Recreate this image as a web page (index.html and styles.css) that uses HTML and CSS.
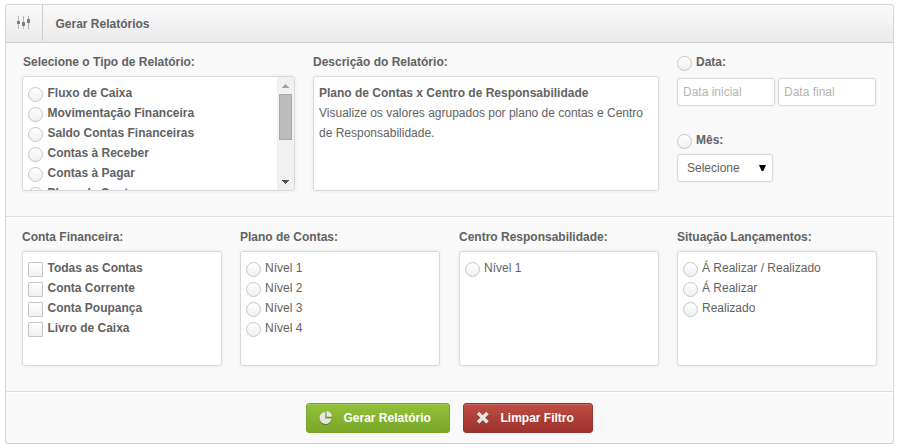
FILE: index.html
```html
<!DOCTYPE html>
<html lang="pt-BR">
<head>
<meta charset="utf-8">
<title>Gerar Relatórios</title>
<link rel="stylesheet" href="styles.css">
</head>
<body>
<form class="panel">
  <header class="head">
    <div class="head-icon">
      <svg width="14" height="14" viewBox="0 0 14 14" shape-rendering="crispEdges">
        <path fill="#b4b4b4" d="M1 0h1v13H1zM6 0h1v13H6zM11 0h1v13h-1z"/>
        <path fill="#808080" d="M0 5h3v3H0zM5 6h3v4H5zM10 3h3v4h-3z"/>
      </svg>
    </div>
    <h1 class="title">Gerar Relatórios</h1>
  </header>

  <section class="row top">
    <div class="field type">
      <div class="label">Selecione o Tipo de Relatório:</div>
      <div class="box scroller">
        <div class="options bold">
          <label class="opt"><i class="radio"></i><span>Fluxo de Caixa</span></label>
          <label class="opt"><i class="radio"></i><span>Movimentação Financeira</span></label>
          <label class="opt"><i class="radio"></i><span>Saldo Contas Financeiras</span></label>
          <label class="opt"><i class="radio"></i><span>Contas à Receber</span></label>
          <label class="opt"><i class="radio"></i><span>Contas à Pagar</span></label>
          <label class="opt"><i class="radio"></i><span>Plano de Contas</span></label>
        </div>
        <div class="bar">
          <svg width="7" height="4" viewBox="0 0 7 4" shape-rendering="crispEdges"><path fill="#a3a3a3" d="M3 0h1v1h1v1h1v1h1v1H0V3h1V2h1V1h1z"/></svg>
          <div class="thumb"></div>
          <svg class="down" width="7" height="4" viewBox="0 0 7 4" shape-rendering="crispEdges"><path fill="#505050" d="M0 0h7v1H6v1H5v1H4v1H3V3H2V2H1V1H0z"/></svg>
        </div>
      </div>
    </div>
    <div class="field desc">
      <div class="label">Descrição do Relatório:</div>
      <div class="box text"><b>Plano de Contas x Centro de Responsabilidade</b><br>Visualize os valores agrupados por plano de contas e Centro de Responsabilidade.</div>
    </div>
    <div class="field period">
      <label class="pick"><i class="radio"></i><span>Data:</span></label>
      <div class="dates">
        <input class="input" type="text" placeholder="Data inicial">
        <input class="input" type="text" placeholder="Data final">
      </div>
      <label class="pick month"><i class="radio"></i><span>Mês:</span></label>
      <div class="select"><span>Selecione</span><svg width="7" height="6" viewBox="0 0 7 6"><path d="M0 0h7L4.300 6H2.700z"/></svg></div>
    </div>
  </section>

  <section class="row filters">
    <div class="field">
      <div class="label">Conta Financeira:</div>
      <div class="box options bold">
        <label class="opt"><i class="check"></i><span>Todas as Contas</span></label>
        <label class="opt"><i class="check"></i><span>Conta Corrente</span></label>
        <label class="opt"><i class="check"></i><span>Conta Poupança</span></label>
        <label class="opt"><i class="check"></i><span>Livro de Caixa</span></label>
      </div>
    </div>
    <div class="field">
      <div class="label">Plano de Contas:</div>
      <div class="box options">
        <label class="opt"><i class="radio"></i><span>Nível 1</span></label>
        <label class="opt"><i class="radio"></i><span>Nível 2</span></label>
        <label class="opt"><i class="radio"></i><span>Nível 3</span></label>
        <label class="opt"><i class="radio"></i><span>Nível 4</span></label>
      </div>
    </div>
    <div class="field">
      <div class="label">Centro Responsabilidade:</div>
      <div class="box options">
        <label class="opt"><i class="radio"></i><span>Nível 1</span></label>
      </div>
    </div>
    <div class="field">
      <div class="label">Situação Lançamentos:</div>
      <div class="box options">
        <label class="opt"><i class="radio"></i><span>Á Realizar / Realizado</span></label>
        <label class="opt"><i class="radio"></i><span>Á Realizar</span></label>
        <label class="opt"><i class="radio"></i><span>Realizado</span></label>
      </div>
    </div>
  </section>

  <footer class="actions">
    <button type="button" class="btn green">
      <svg width="14" height="14" viewBox="0 0 14 14"><path fill="#e6e6e6" d="M6 1v6.500h6.500A6 6 0 1 1 6 1z"/><path fill="#e6e6e6" d="M7.500 0A6 6 0 0 1 13 5.800H7.500z"/></svg>
      <span>Gerar Relatório</span>
    </button>
    <button type="button" class="btn red">
      <svg width="14" height="14" viewBox="0 0 14 14"><path stroke="#e6e6e6" stroke-width="3.600" fill="none" d="M2 2l9.500 9.500M11.500 2L2 11.500"/></svg>
      <span>Limpar Filtro</span>
    </button>
  </footer>
</form>
</body>
</html>
```
FILE: styles.css
```css
* { box-sizing: border-box; }
body {
  margin: 0;
  padding: 4px 5px;
  background: #fff;
  color: #626262;
  font: 12px/20px "Liberation Sans", Arial, sans-serif;
}
.panel {
  width: 889px;
  height: 440px;
  background: #f9f9f9;
  border: 1px solid #d5d5d5;
  border-bottom-color: #cdcdcd;
  border-radius: 3px;
}
.head {
  display: flex;
  height: 38px;
  background: linear-gradient(#fafafa, #ebebeb);
  border-bottom: 1px solid #cdcdcd;
  border-radius: 2px 2px 0 0;
}
.head-icon {
  width: 37px;
  height: 36px;
  padding: 11px 0 0 11px;
  border-right: 1px solid #cdcdcd;
}
.head-icon svg { display: block; }
.title {
  margin: 0;
  padding: 9px 12.500px;
  font-size: 12px;
  line-height: 20px;
}
.row { display: flex; padding: 9px 16px 0; }
.top { height: 174px; border-bottom: 1px solid #dfdfdf; }
.filters {
  height: 175px;
  gap: 18px;
  border-top: 1px solid #fff;
  border-bottom: 1px solid #dfdfdf;
}
.filters .field { width: 200px; flex: none; }
.filters .field:nth-child(3) { margin-left: 1px; }
.label { height: 24px; font-weight: bold; }
.type { width: 273px; margin-right: 18px; }
.type .label { padding-left: 1px; }
.desc { width: 346px; margin-right: 18px; }
.box {
  height: 115px;
  background: #fff;
  border: 1px solid #d9d9d9;
  border-radius: 3px;
  box-shadow: 0 0 0 2px #f4f4f4;
}
.options { padding: 6px 5px; }
.bold { font-weight: bold; }
.bold .opt { gap: 4.500px; }
.scroller { display: flex; overflow: hidden; }
.scroller .options { flex: 1; }
.bar {
  display: flex;
  flex-direction: column;
  align-items: center;
  width: 17px;
  padding: 7px 0 6px;
  background: #f1f1f1;
}
.thumb {
  width: 13px;
  height: 46px;
  margin-top: 6px;
  background: #bcbcbc;
  border: 1px solid #a8a8a8;
}
.down { margin-top: auto; }
.opt, .pick { display: flex; height: 20px; gap: 4px; }
.radio, .check {
  flex: none;
  width: 15px;
  height: 15px;
  margin-top: 4px;
  background: linear-gradient(#fff, #f0f0f0);
  border: 1px solid #c6c6c6;
}
.radio { border-radius: 50%; }
.check { border-radius: 1px; }
.text { padding: 6px 5px; }
.period { width: 200px; }
.pick { font-weight: bold; }
.dates { display: flex; gap: 3px; margin-top: 6px; }
.input, .select {
  height: 28px;
  background: #fff;
  border: 1px solid #d9d9d9;
  border-radius: 3px;
  box-shadow: 0 0 0 1px #f4f4f4;
}
.input { width: 98px; padding: 0 5px; font: inherit; }
.input::placeholder { color: #b4b4b4; opacity: 1; }
.month { margin-top: 24px; }
.select {
  display: flex;
  align-items: center;
  justify-content: space-between;
  width: 96px;
  margin-top: 4px;
  padding: 0 6px 0 9px;
}
.select svg { fill: #000; }
.actions {
  display: flex;
  justify-content: center;
  gap: 13px;
  height: 51px;
  padding-top: 10px;
  border-top: 1px solid #fff;
}
.btn {
  display: flex;
  align-items: center;
  width: 144px;
  height: 30px;
  padding: 0 12px;
  gap: 10.500px;
  color: #fff;
  font: bold 12px/20px "Liberation Sans", Arial, sans-serif;
  border: 1px solid;
  border-radius: 3px;
}
.btn svg { filter: drop-shadow(0 1px 0 rgba(0, 0, 0, .3)); }
.green {
  background: linear-gradient(#93c137, #78a72a);
  border-color: #77a52b;
  box-shadow: inset 0 1px 0 #a0ca4f;
}
.red {
  width: 130px;
  background: linear-gradient(#bf4e46, #9d312b);
  border-color: #98332d;
  box-shadow: inset 0 1px 0 #ca6962;
}
```
